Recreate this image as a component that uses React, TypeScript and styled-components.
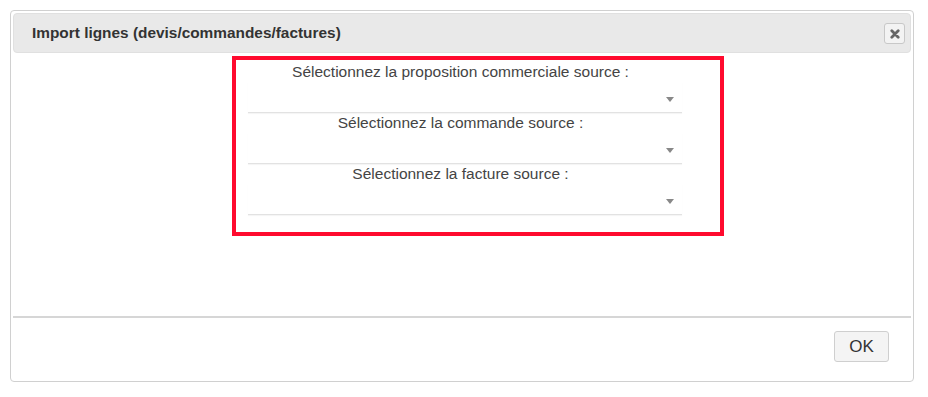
import styled, { createGlobalStyle } from "styled-components";

const GlobalStyle = createGlobalStyle`
  html, body {
    margin: 0;
    padding: 0;
    background: #fff;
    font-family: "Liberation Sans", Arial, sans-serif;
  }
`;

const Page = styled.div`
  padding: 10px 0 0 10px;
`;

const Dialog = styled.div`
  box-sizing: border-box;
  width: 904px;
  height: 372px;
  border: 1px solid #d0d0d0;
  border-radius: 4px;
  padding: 2px;
  display: flex;
  flex-direction: column;
  background: #fff;
`;

const TitleBar = styled.div`
  box-sizing: border-box;
  height: 40px;
  display: flex;
  align-items: center;
  justify-content: space-between;
  padding: 0 5px 0 18px;
  background: #e9e9e9;
  border: 1px solid #e0e0e0;
  border-radius: 4px;
`;

const Title = styled.span`
  font-size: 15.4px;
  font-weight: bold;
  color: #333;
`;

const CloseButton = styled.button`
  box-sizing: border-box;
  width: 21px;
  height: 21px;
  margin-top: 1px;
  padding: 0;
  display: flex;
  align-items: center;
  justify-content: center;
  background: #f3f3f3;
  border: 1px solid #c8c8c8;
  border-radius: 3px;
`;

const Content = styled.div`
  flex: 1;
  padding: 3px 0 0 219px;
`;

const Highlight = styled.div`
  box-sizing: border-box;
  width: 492px;
  height: 180px;
  border: 4px solid #ff0a2e;
  padding: 2px 38px 0 12px;
`;

const Field = styled.div`
  display: flex;
  flex-direction: column;
`;

const Label = styled.div`
  height: 20px;
  line-height: 20px;
  padding-right: 9px;
  text-align: center;
  font-size: 15.5px;
  color: #444;
  white-space: nowrap;
`;

const Select = styled.div`
  box-sizing: border-box;
  height: 31px;
  display: flex;
  align-items: center;
  justify-content: flex-end;
  padding: 5px 8px 0 0;
  border-bottom: 1px solid #e2e2e2;
  box-shadow: 0 1px 1px rgba(0, 0, 0, 0.04);
`;

const Arrow = styled.span`
  width: 0;
  height: 0;
  border-left: 4px solid transparent;
  border-right: 4px solid transparent;
  border-top: 5px solid #888;
`;

const Footer = styled.div`
  box-sizing: border-box;
  height: 63px;
  display: flex;
  align-items: flex-start;
  justify-content: flex-end;
  padding: 13px 22px 0 0;
  border-top: 2px solid #d6d6d6;
`;

const OkButton = styled.button`
  box-sizing: border-box;
  width: 55px;
  height: 31px;
  font-family: "Liberation Sans", Arial, sans-serif;
  font-size: 17px;
  color: #333;
  background: #f4f4f4;
  border: 1px solid #cfcfcf;
  border-radius: 3px;
`;

const fields = [
  "Sélectionnez la proposition commerciale source :",
  "Sélectionnez la commande source :",
  "Sélectionnez la facture source :",
];

const CloseIcon = () => (
  <svg width="10" height="10" viewBox="0 0 10 10">
    <path d="M1.8 1.8 L8.2 8.2 M8.2 1.8 L1.8 8.2" stroke="#666" strokeWidth="2.8" strokeLinecap="round" />
  </svg>
);

const App = () => {
  return (
    <Page>
      <GlobalStyle />
      <Dialog>
        <TitleBar>
          <Title>Import lignes (devis/commandes/factures)</Title>
          <CloseButton aria-label="Fermer">
            <CloseIcon />
          </CloseButton>
        </TitleBar>
        <Content>
          <Highlight>
            {fields.map((label) => (
              <Field key={label}>
                <Label>{label}</Label>
                <Select>
                  <Arrow />
                </Select>
              </Field>
            ))}
          </Highlight>
        </Content>
        <Footer>
          <OkButton>OK</OkButton>
        </Footer>
      </Dialog>
    </Page>
  );
};

export default App;
